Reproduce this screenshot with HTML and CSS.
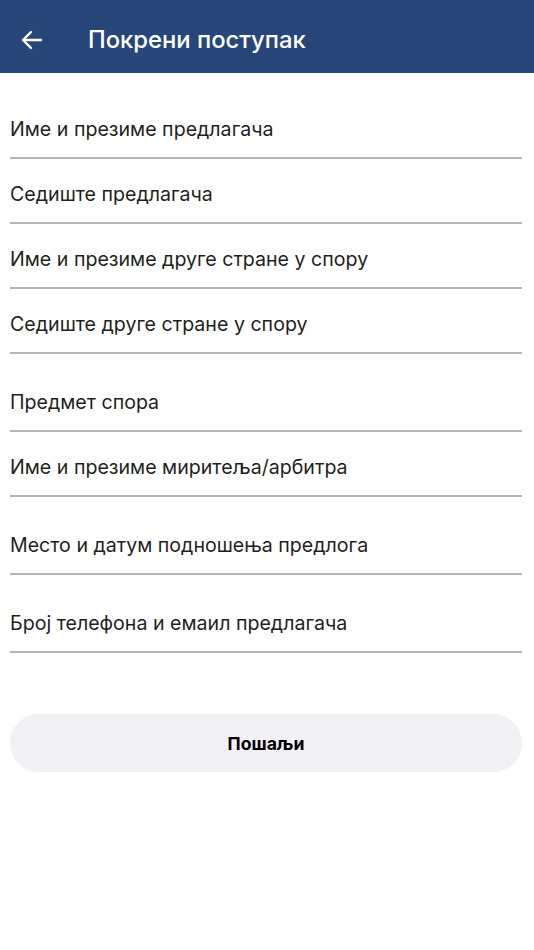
FILE: index.html
```html
<!DOCTYPE html>
<html lang="sr">
<head>
  <meta charset="UTF-8" />
  <meta name="viewport" content="width=device-width, initial-scale=1.0"/>
  <title>Покрени поступак</title>
  <link rel="stylesheet" href="styles.css">
</head>
<body>
  <div class="header">
    <span class="back">
      <svg width="22" height="20" viewBox="0 0 22 20" fill="none" stroke="#fff" stroke-width="2.4" stroke-linecap="round" stroke-linejoin="round">
        <path d="M20 10H3"/>
        <path d="M10 2L2 10l8 8"/>
      </svg>
    </span>
    <span class="title">Покрени поступак</span>
  </div>

  <div class="form">
    <div class="field">Име и презиме предлагача</div>
    <div class="field">Седиште предлагача</div>
    <div class="field">Име и презиме друге стране у спору</div>
    <div class="field">Седиште друге стране у спору</div>
    <div class="field tall">Предмет спора</div>
    <div class="field">Име и презиме миритеља/арбитра</div>
    <div class="field tall">Место и датум подношења предлога</div>
    <div class="field tall">Број телефона и емаил предлагача</div>

    <button class="send">Пошаљи</button>
  </div>
</body>
</html>
```

FILE: styles.css
```css
:root {
  --primary: #27467a;
  --text: #1f1f21;
  --line: #b4b4b4;
  --button: #f0f0f5;
}
* {
  box-sizing: border-box;
  margin: 0;
  padding: 0;
  font-family: Inter, "Noto Sans", sans-serif;
}
body {
  background: #fff;
  color: var(--text);
}
.header {
  height: 73px;
  background: var(--primary);
  color: #fff;
  display: flex;
  align-items: center;
  padding: 5px 0 0 21px;
}
.back {
  display: flex;
  width: 67px;
  padding-top: 1px;
}
.title {
  font-size: 23.8px;
  font-weight: 500;
}
.form {
  padding: 21px 12px 0 10px;
}
.field {
  font-size: 19.6px;
  line-height: 24px;
  padding: 23px 0 16px;
  border-bottom: 2px solid var(--line);
}
.field.tall {
  padding-top: 36px;
}
.send {
  display: block;
  width: 100%;
  height: 58px;
  margin-top: 61px;
  border: none;
  border-radius: 29px;
  background: var(--button);
  color: #000;
  font-size: 17.6px;
  font-weight: 700;
  cursor: pointer;
}
```
